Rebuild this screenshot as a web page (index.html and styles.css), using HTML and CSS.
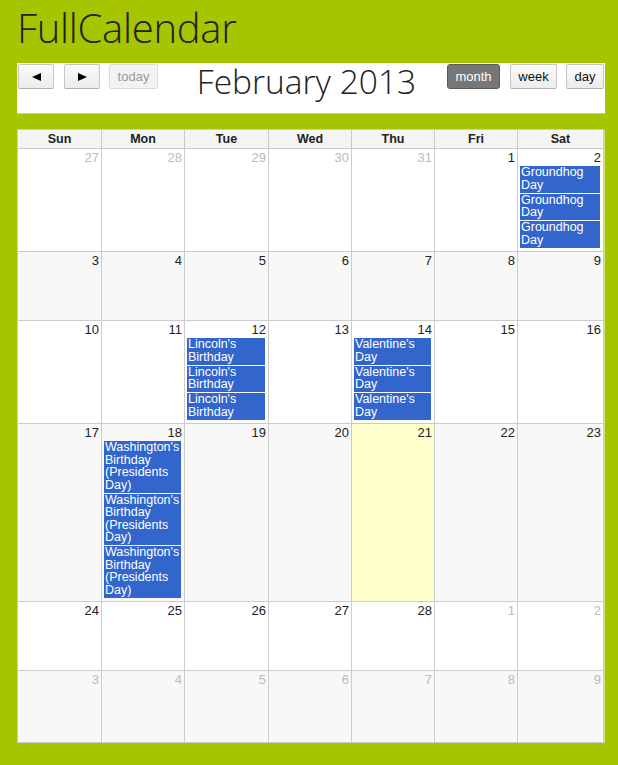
FILE: index.html
```html
<!DOCTYPE html>
<html>
<head>
<meta charset="utf-8">
<title>FullCalendar</title>
<link rel="stylesheet" href="styles.css">
</head>
<body>
<div class="page">
  <h1 class="brand">FullCalendar</h1>
  <div class="toolbar">
    <div class="tb-left">
      <button class="btn btn-icon"><svg width="9" height="8" viewBox="0 0 9 8"><polygon points="0,4 9,0 9,8" fill="#000"/></svg></button>
      <button class="btn btn-icon"><svg width="9" height="8" viewBox="0 0 9 8"><polygon points="9,4 0,0 0,8" fill="#000"/></svg></button>
      <button class="btn btn-disabled">today</button>
    </div>
    <h2 class="tb-title">February 2013</h2>
    <div class="tb-right">
      <button class="btn btn-active">month</button>
      <button class="btn">week</button>
      <button class="btn">day</button>
    </div>
  </div>

  <div class="cal">
    <div class="dow">Sun</div><div class="dow">Mon</div><div class="dow">Tue</div><div class="dow">Wed</div><div class="dow">Thu</div><div class="dow">Fri</div><div class="dow">Sat</div>

    <div class="day other"><div class="num">27</div></div>
    <div class="day other"><div class="num">28</div></div>
    <div class="day other"><div class="num">29</div></div>
    <div class="day other"><div class="num">30</div></div>
    <div class="day other"><div class="num">31</div></div>
    <div class="day"><div class="num">1</div></div>
    <div class="day"><div class="num">2</div>
      <div class="ev">Groundhog Day</div>
      <div class="ev">Groundhog Day</div>
      <div class="ev">Groundhog Day</div>
    </div>

    <div class="day alt"><div class="num">3</div></div>
    <div class="day alt"><div class="num">4</div></div>
    <div class="day alt"><div class="num">5</div></div>
    <div class="day alt"><div class="num">6</div></div>
    <div class="day alt"><div class="num">7</div></div>
    <div class="day alt"><div class="num">8</div></div>
    <div class="day alt"><div class="num">9</div></div>

    <div class="day"><div class="num">10</div></div>
    <div class="day"><div class="num">11</div></div>
    <div class="day"><div class="num">12</div>
      <div class="ev">Lincoln's Birthday</div>
      <div class="ev">Lincoln's Birthday</div>
      <div class="ev">Lincoln's Birthday</div>
    </div>
    <div class="day"><div class="num">13</div></div>
    <div class="day"><div class="num">14</div>
      <div class="ev">Valentine's Day</div>
      <div class="ev">Valentine's Day</div>
      <div class="ev">Valentine's Day</div>
    </div>
    <div class="day"><div class="num">15</div></div>
    <div class="day"><div class="num">16</div></div>

    <div class="day alt"><div class="num">17</div></div>
    <div class="day alt"><div class="num">18</div>
      <div class="ev">Washington's Birthday (Presidents Day)</div>
      <div class="ev">Washington's Birthday (Presidents Day)</div>
      <div class="ev">Washington's Birthday (Presidents Day)</div>
    </div>
    <div class="day alt"><div class="num">19</div></div>
    <div class="day alt"><div class="num">20</div></div>
    <div class="day today"><div class="num">21</div></div>
    <div class="day alt"><div class="num">22</div></div>
    <div class="day alt"><div class="num">23</div></div>

    <div class="day"><div class="num">24</div></div>
    <div class="day"><div class="num">25</div></div>
    <div class="day"><div class="num">26</div></div>
    <div class="day"><div class="num">27</div></div>
    <div class="day"><div class="num">28</div></div>
    <div class="day other"><div class="num">1</div></div>
    <div class="day other"><div class="num">2</div></div>

    <div class="day alt other"><div class="num">3</div></div>
    <div class="day alt other"><div class="num">4</div></div>
    <div class="day alt other"><div class="num">5</div></div>
    <div class="day alt other"><div class="num">6</div></div>
    <div class="day alt other"><div class="num">7</div></div>
    <div class="day alt other"><div class="num">8</div></div>
    <div class="day alt other"><div class="num">9</div></div>
  </div>
</div>
</body>
</html>
```
FILE: styles.css
```css
html, body {
  margin: 0;
  padding: 0;
  background: #a7c400;
}
.page {
  padding: 4px 13px 0 17px;
  font-family: "Liberation Sans", Arial, sans-serif;
}
.brand {
  margin: 0 0 11px 0;
  font-family: "Open Sans", sans-serif;
  font-weight: 300;
  font-size: 40px;
  line-height: 48px;
  color: #222;
  letter-spacing: -0.3px;
}
.toolbar {
  width: 588px;
  height: 50px;
  box-sizing: border-box;
  padding: 1px;
  background: #fff;
  display: flex;
  align-items: flex-start;
  box-shadow: 0 1px 0 #c8c8c8;
}
.tb-left, .tb-right {
  display: flex;
  gap: 9px;
}
.tb-title {
  flex: 1;
  margin: 0;
  padding-left: 8px;
  text-align: center;
  font-family: "Open Sans", sans-serif;
  font-weight: 300;
  font-size: 33.5px;
  line-height: 34px;
  color: #222;
}
.btn {
  height: 25px;
  box-sizing: border-box;
  margin: 0;
  padding: 0 6px;
  border: 1px solid #c6c6c6;
  border-bottom-color: #b0b0b0;
  border-radius: 2px;
  background: linear-gradient(#fafafa, #ececec);
  font-family: "Liberation Sans", Arial, sans-serif;
  font-size: 13px;
  color: #111;
  display: flex;
  align-items: center;
  justify-content: center;
}
.btn-icon {
  width: 36px;
}
.btn-icon:nth-child(2) {
  margin-left: 1px;
}
.btn-disabled {
  width: 49px;
  color: #999;
  background: #f3f3f3;
  border-color: #dcdcdc;
}
.btn-active {
  width: 53px;
  color: #fff;
  background: #777;
  border-color: #5a5a5a;
  border-radius: 3px;
}
.tb-right .btn:nth-child(2) { width: 47px; margin-left: 1px; }
.tb-right .btn:nth-child(3) { width: 38px; }

.cal {
  margin-top: 16px;
  width: 587px;
  box-sizing: border-box;
  display: grid;
  grid-template-columns: 83fr 82fr 83fr 82fr 82fr 82fr 85fr;
  grid-template-rows: 18px 102px 68px 102px 177px 68px 71px;
  gap: 1px;
  background: #ccc;
  border: 1px solid #ccc;
  box-shadow: 1px 1px 0 rgba(255,255,255,0.5);
}
.dow {
  background: #f4f4f4;
  text-align: center;
  font-weight: bold;
  font-size: 12.5px;
  line-height: 18px;
  color: #222;
}
.day {
  background: #fff;
  overflow: hidden;
}
.day.alt {
  background: #f8f8f8;
}
.day.today {
  background: #ffffcc;
}
.num {
  text-align: right;
  padding-right: 2px;
  font-size: 13px;
  line-height: 17px;
  color: #222;
}
.other .num {
  color: #bbb;
}
.ev {
  margin: 0 3px 1px 2px;
  padding: 0 1px 1.5px 1px;
  background: #3366cc;
  color: #fff;
  font-size: 12.5px;
  line-height: 12.5px;
}
```
